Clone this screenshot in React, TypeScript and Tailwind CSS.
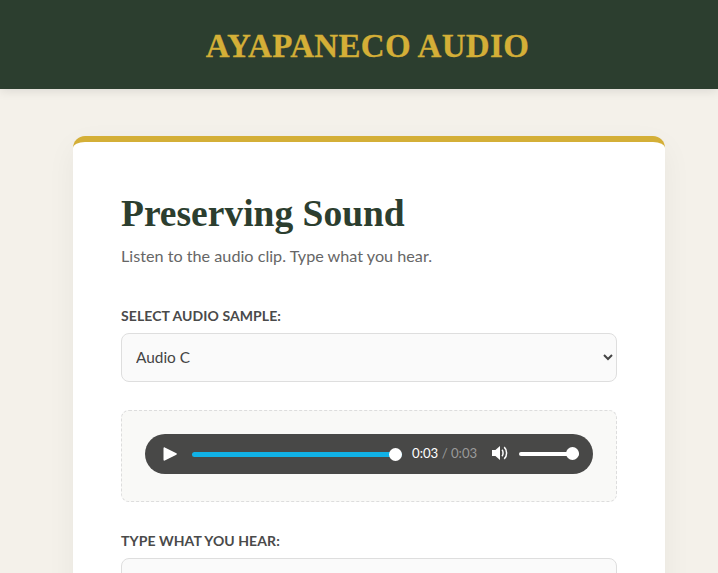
import { useState } from "react";

function PlayIcon() {
  return (
    <svg width="14" height="14" viewBox="0 0 14 14" className="shrink-0">
      <path d="M0.5 1.2 C0.5 0.4 1.1 0 1.8 0.4 L13.4 6.3 C14 6.6 14 7.4 13.4 7.7 L1.8 13.6 C1.1 14 0.5 13.6 0.5 12.8 Z" fill="#fff" />
    </svg>
  );
}

function VolumeIcon() {
  return (
    <svg width="17" height="16" viewBox="0 0 17 15" className="-mt-[2px] shrink-0">
      <path d="M0 4.6 H3.4 L8 0.4 V14.6 L3.4 10.4 H0 Z" fill="#fff" />
      <path d="M10 4.2 C11.4 5.6 11.4 9.4 10 10.8" fill="none" stroke="#fff" strokeWidth="1.5" />
      <path d="M12.2 1.6 C15.4 4.4 15.4 10.6 12.2 13.4" fill="none" stroke="#fff" strokeWidth="1.5" />
    </svg>
  );
}

function AudioPlayer() {
  return (
    <div className="flex h-10 w-full items-center rounded-full bg-[#484847] pl-[18px] pr-[14px] text-white">
      <PlayIcon />
      <div className="relative ml-[15px] h-[5px] w-[210px] rounded-full bg-[#10b1e6]">
        <span className="absolute -top-1 right-0 h-[13px] w-[13px] rounded-full bg-white" />
      </div>
      <div className="ml-[10px] w-[65px] whitespace-nowrap text-[13.2px] leading-none">
        0:03 <span className="text-[#9a9a9a]">/ 0:03</span>
      </div>
      <div className="ml-[15px]">
        <VolumeIcon />
      </div>
      <div className="relative ml-[10px] h-1 w-[60px] rounded-full bg-white">
        <span className="absolute -top-[5px] right-0 h-[13px] w-[13px] rounded-full bg-white" />
      </div>
    </div>
  );
}

export default function App() {
  const [sample, setSample] = useState("c");
  const [text, setText] = useState("");

  return (
    <div className="h-screen overflow-hidden bg-[#f4f1ea] font-['Lato',sans-serif]">
      <header className="flex h-[89px] items-center justify-center bg-[#2c3e2f] pl-[17px] pt-[3px] shadow-[0_2px_10px_rgba(0,0,0,0.1)]">
        <h1 className="font-['Liberation_Serif',serif] text-[33px] font-bold leading-none tracking-[0.3px] text-[#d4af37] [-webkit-text-stroke:0.3px_#d4af37]">
          AYAPANECO AUDIO
        </h1>
      </header>

      <main className="ml-[73px] mt-[47px] w-[592px] rounded-xl border-t-[6px] border-[#d4af37] bg-white px-12 pb-12 pt-[46px] shadow-[0_10px_30px_rgba(0,0,0,0.05)]">
        <h2 className="font-['Liberation_Serif',serif] text-[37.5px] font-bold leading-[52px] text-[#2c3e2f]">
          Preserving Sound
        </h2>
        <p className="mt-[3px] text-[16.2px] leading-[26px] text-[#666666]">
          Listen to the audio clip. Type what you hear.
        </p>

        <label className="mt-[38px] block text-[14px] font-bold uppercase leading-[18px] tracking-[0.08px] text-[#4a4a4a]">
          Select Audio Sample:
        </label>
        <select
          value={sample}
          onChange={(e) => setSample(e.target.value)}
          className="mt-2 block h-[49px] w-full rounded-lg border-[1.5px] border-[#dedede] bg-[#fafafa] px-[10px] pb-[2px] text-[15.4px] text-[#444444]"
        >
          <option value="a">Audio A</option>
          <option value="b">Audio B</option>
          <option value="c">Audio C</option>
        </select>

        <div className="mt-7 flex h-[92px] items-start rounded-lg border border-dashed border-[#dddddd] bg-[#f9f9f7] px-[23px] pt-[23px]">
          <AudioPlayer />
        </div>

        <label className="mt-[30px] block text-[14px] font-bold uppercase leading-[18px] tracking-[0.08px] text-[#4a4a4a]">
          Type what you hear:
        </label>
        <textarea
          value={text}
          onChange={(e) => setText(e.target.value)}
          className="mt-2 block h-[120px] w-full resize-none rounded-lg border-[1.5px] border-[#dedede] bg-[#fafafa] px-4 py-3 text-base"
        />
      </main>
    </div>
  );
}
